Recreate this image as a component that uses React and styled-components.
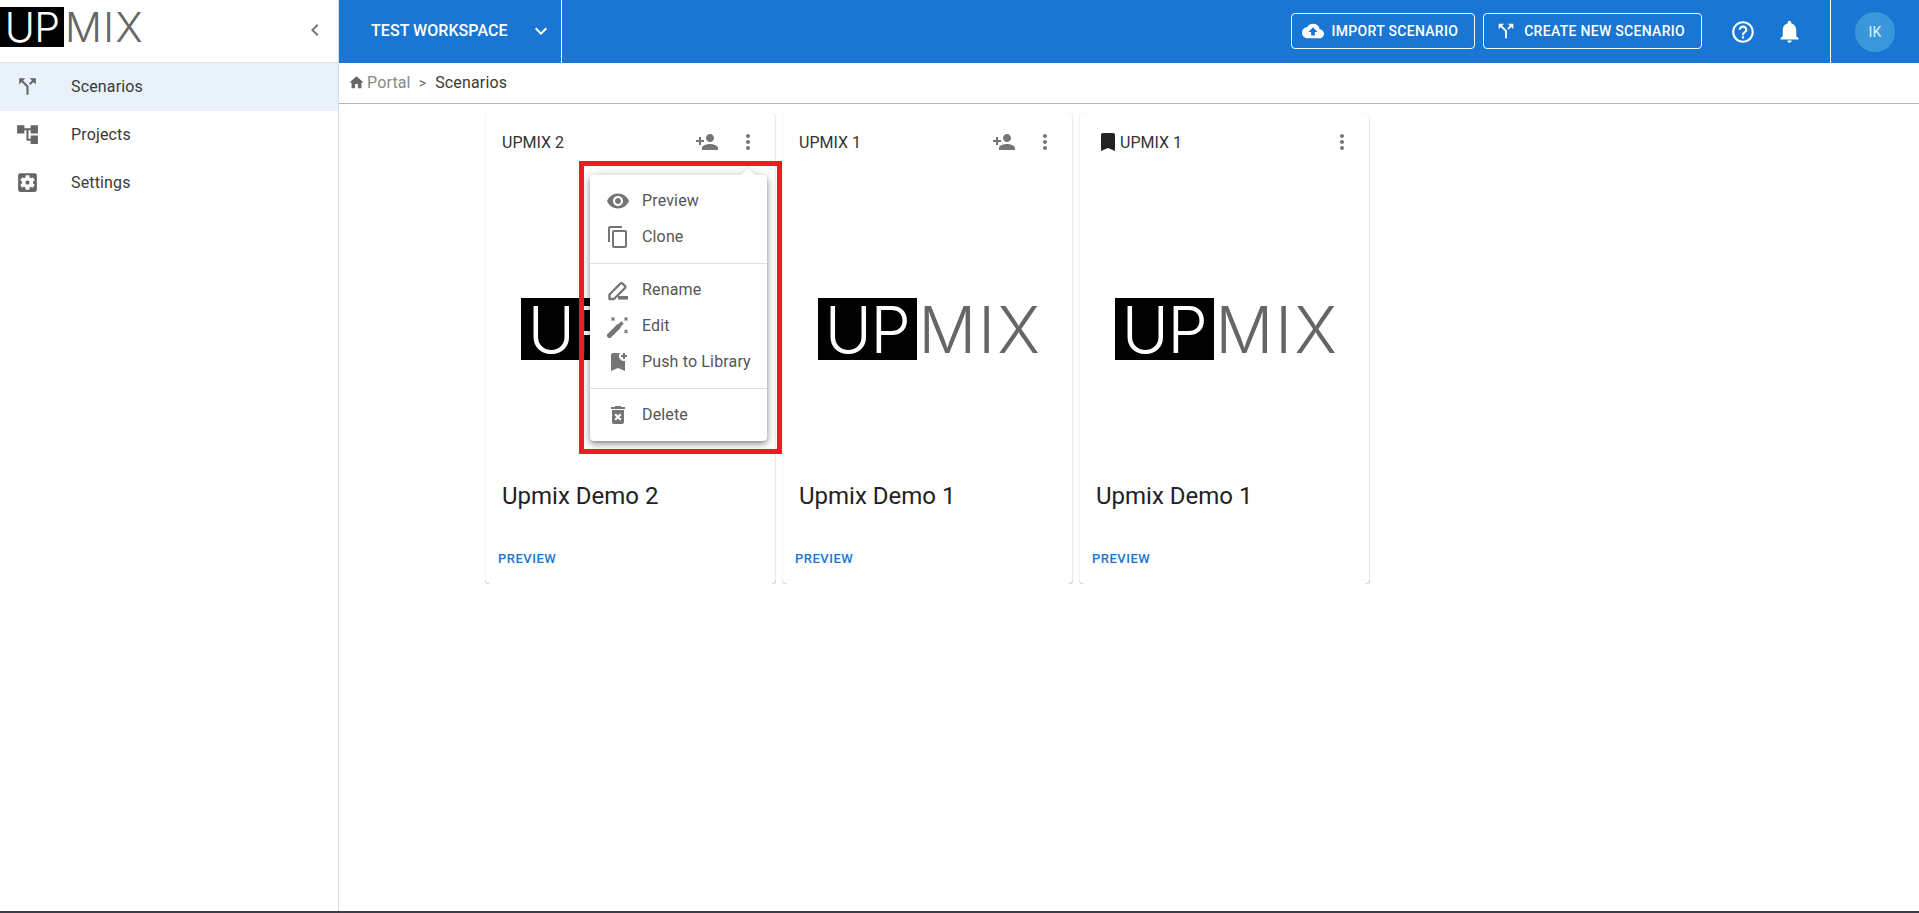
import React from "react";
import styled, { createGlobalStyle } from "styled-components";
import {
  MdCallSplit, MdAccountTree, MdSettingsApplications, MdHome, MdChevronLeft, MdKeyboardArrowDown,
  MdCloudUpload, MdHelpOutline, MdNotifications, MdPersonAdd, MdMoreVert, MdVisibility, MdContentCopy,
  MdBookmarkAdd, MdDeleteForever, MdBookmark,
} from "react-icons/md";

const Global = createGlobalStyle`
  html, body { margin: 0; padding: 0; background: #fff; }
  body { font-family: Roboto, "Liberation Sans", sans-serif; color: #333; overflow: hidden; letter-spacing: 0.15px; }
  * { box-sizing: border-box; }
`;

const Page = styled.div`display: flex; flex-direction: column; height: 913px;`;
const Shell = styled.div`flex: 1; display: grid; grid-template-columns: 339px 1fr; min-height: 0;`;
const BottomLine = styled.div`height: 2px; background: #3c3c46;`;

const Sidebar = styled.aside`border-right: 1px solid #dcdcdc; display: flex; flex-direction: column;`;
const SidebarTop = styled.div`
  height: 63px; border-bottom: 1px solid #e0e0e0; display: flex; align-items: flex-start; justify-content: space-between;
  padding: 7px 11px 0 0; color: #757575;
`;
const CollapseIcon = styled.span`display: flex; margin-top: 11px; font-size: 24px;`;
const NavItem = styled.div`
  height: 48px; display: flex; align-items: center; gap: 31px; padding: 0 0 1px 15px; font-size: 16px; color: #3a3a3a;
  background: ${(p) => (p.$active ? "#e9f1fa" : "transparent")};
  svg { font-size: 25px; color: #666; flex: none; }
`;

const LogoWrap = styled.div`display: flex; align-items: stretch; height: ${(p) => (p.$small ? 40 : 62)}px; width: ${(p) => (p.$small ? 142 : 220)}px; flex: none;`;
const LogoUp = styled.span`
  flex: none; background: #000; color: #fff; width: ${(p) => (p.$small ? 64 : 99)}px; display: flex; align-items: center; justify-content: center;
  padding-top: ${(p) => (p.$small ? 1 : 2)}px;
  font-family: Inter, sans-serif; font-weight: 300; font-size: ${(p) => (p.$small ? 41 : 64)}px; line-height: 1; letter-spacing: -0.02em;
`;
const LogoMix = styled.span`
  flex: none; color: #666; display: flex; align-items: center; padding: ${(p) => (p.$small ? "1px 0 0 1px" : "2px 0 0 2px")};
  font-family: Inter, sans-serif; font-weight: 300; font-size: ${(p) => (p.$small ? 41 : 64)}px; line-height: 1; letter-spacing: 0.035em;
`;
const Logo = ({ small }) => (
  <LogoWrap $small={small}>
    <LogoUp $small={small}>UP</LogoUp>
    <LogoMix $small={small}>MIX</LogoMix>
  </LogoWrap>
);

const Main = styled.main`display: flex; flex-direction: column; min-width: 0;`;
const Header = styled.header`height: 63px; background: #1976d2; display: flex; align-items: stretch; color: #fff;`;
const Workspace = styled.div`
  width: 223px; padding: 0 8px 2px 32px; border-right: 1px solid #fff; display: flex; align-items: center; justify-content: space-between;
  font-size: 16px; font-weight: 500; letter-spacing: 0.05px;
  svg { font-size: 24px; }
`;
const HeaderActions = styled.div`margin-left: auto; display: flex; align-items: center; gap: 8px;`;
const OutlineButton = styled.button`
  height: 36px; margin-bottom: 1px; border: 1px solid #fff; border-radius: 4px; background: transparent; color: #fff;
  display: flex; align-items: center; gap: ${(p) => p.$gap}px; padding: 0 16px 0 ${(p) => p.$pad}px;
  font-family: inherit; font-size: 14px; font-weight: 500; letter-spacing: 0.3px;
  svg { font-size: 22px; flex: none; }
`;
const HeaderIcons = styled.div`display: flex; margin: 0 17px; align-items: center;`;
const HeaderIcon = styled.span`width: 47px; display: flex; justify-content: center; font-size: ${(p) => p.$size}px;`;
const UserArea = styled.div`width: 89px; border-left: 1px solid #fff; display: flex; align-items: center; justify-content: center;`;
const Avatar = styled.div`
  width: 40px; height: 40px; border-radius: 50%; background: #3b97dc; display: flex; align-items: center; justify-content: center;
  font-size: 14px; color: #e3f0fa;
`;

const Breadcrumb = styled.nav`
  height: 41px; border-bottom: 1px solid #b5b5b5; display: flex; align-items: center; padding: 0 0 1px 9px; font-size: 16px;
  svg { font-size: 17px; color: #666; margin-right: 2px; }
`;
const CrumbLink = styled.span`color: #888;`;
const CrumbSep = styled.span`color: #666; margin: 0 9px 0 8px; font-size: 14px;`;
const CrumbHere = styled.span`color: #3a3a3a;`;

const Content = styled.div`flex: 1; padding: 9px 0 0 147px; display: flex; gap: 8px; align-items: flex-start;`;
const Card = styled.article`
  width: 289px; position: relative; background: #fff; border-radius: 4px; flex: none;
  box-shadow: 1px 0 1px rgba(0,0,0,.09), -1px 0 1px rgba(0,0,0,.05);
  &::before, &::after {
    content: ""; position: absolute; bottom: -1px; width: 3px; height: 3px; border-bottom: 1px solid #d4d4d4;
  }
  &::before { left: -1px; border-left: 1px solid #e4e4e4; border-bottom-left-radius: 3px; }
  &::after { right: -1px; border-right: 1px solid #d4d4d4; border-bottom-right-radius: 3px; }
`;
const CardHeader = styled.div`height: 58px; display: flex; align-items: center; padding: 0 7px 0 16px;`;
const CardTag = styled.div`flex: 1; display: flex; align-items: center; font-size: 16px; color: #333; letter-spacing: 0; svg { font-size: 24px; color: #222; }`;
const CardIcon = styled.span`width: 41px; display: flex; justify-content: center; font-size: 24px; color: #757575;`;
const Media = styled.div`height: 300px; padding-top: 127px; display: flex; justify-content: center; align-items: flex-start;`;
const CardName = styled.h3`margin: 0; height: 50px; padding-left: 16px; display: flex; align-items: center; font-size: 24px; font-weight: 400; color: #222; letter-spacing: 0;`;
const CardActions = styled.div`height: 62px; padding: 12px 0 0 12px; display: flex; align-items: center;`;
const PreviewLink = styled.span`font-size: 13px; font-weight: 500; letter-spacing: 0.5px; color: #1976d2;`;

const Menu = styled.div`
  position: absolute; left: 104px; top: 62px; width: 177px; background: #fff; border-radius: 4px; padding: 8px 0; z-index: 2;
  box-shadow: 0 2px 4px -1px rgba(0,0,0,.35), 0 4px 8px rgba(0,0,0,.2), 0 1px 14px rgba(0,0,0,.15);
  &::before {
    content: ""; position: absolute; top: -5px; right: 14px; width: 10px; height: 10px; background: #fff; transform: rotate(45deg);
    box-shadow: -1px -1px 2px rgba(0,0,0,.08);
  }
`;
const MenuItem = styled.div`
  height: 36px; display: flex; align-items: center; gap: 12px; padding: 0 0 1px 16px; font-size: 16px; color: #555; position: relative;
  svg { font-size: 24px; color: #757575; flex: none; }
`;
const MenuDivider = styled.hr`margin: 8px 0; border: 0; height: 1px; background: #e0e0e0;`;
const Annotation = styled.div`position: absolute; left: 93px; top: 48px; width: 203px; height: 293px; border: 5px solid #ed1c24; z-index: 3; pointer-events: none;`;

const RenameIcon = () => (
  <svg width="1em" height="1em" viewBox="0 0 24 24">
    <path d="M3.5 16.5L14.5 5.5a1.4 1.4 0 0 1 2 0l2.5 2.5a1.4 1.4 0 0 1 0 2L8 21H3.5z" fill="none" stroke="currentColor" strokeWidth="2.4" strokeLinejoin="round" />
    <rect x="12" y="18" width="10" height="3.6" fill="currentColor" />
  </svg>
);

const WandIcon = () => (
  <svg width="1em" height="1em" viewBox="0 0 24 24" fill="none" stroke="currentColor">
    <line x1="3.5" y1="21.5" x2="12" y2="13" strokeWidth="5" strokeLinecap="round" />
    <line x1="12.5" y1="12.5" x2="16.5" y2="8.5" strokeWidth="3.4" />
    <g strokeWidth="1.3">
      <line x1="5.5" y1="3.5" x2="8.5" y2="6.5" />
      <line x1="8.5" y1="3.5" x2="5.5" y2="6.5" />
      <line x1="18.5" y1="3.5" x2="21.5" y2="6.5" />
      <line x1="21.5" y1="3.5" x2="18.5" y2="6.5" />
      <line x1="18.5" y1="16" x2="21.5" y2="19" />
      <line x1="21.5" y1="16" x2="18.5" y2="19" />
    </g>
  </svg>
);

const cards = [
  { tag: "UPMIX 2", name: "Upmix Demo 2", share: true, menu: true },
  { tag: "UPMIX 1", name: "Upmix Demo 1", share: true },
  { tag: "UPMIX 1", name: "Upmix Demo 1", saved: true },
];

const ScenarioCard = ({ card }) => (
  <Card>
    <CardHeader>
      <CardTag>{card.saved && <MdBookmark />}{card.tag}</CardTag>
      {card.share && <CardIcon><MdPersonAdd /></CardIcon>}
      <CardIcon><MdMoreVert /></CardIcon>
    </CardHeader>
    <Media><Logo /></Media>
    <CardName>{card.name}</CardName>
    <CardActions><PreviewLink>PREVIEW</PreviewLink></CardActions>
    {card.menu && (
      <>
        <Menu>
          <MenuItem><MdVisibility />Preview</MenuItem>
          <MenuItem><MdContentCopy />Clone</MenuItem>
          <MenuDivider />
          <MenuItem><RenameIcon />Rename</MenuItem>
          <MenuItem><WandIcon />Edit</MenuItem>
          <MenuItem><MdBookmarkAdd />Push to Library</MenuItem>
          <MenuDivider />
          <MenuItem><MdDeleteForever />Delete</MenuItem>
        </Menu>
        <Annotation />
      </>
    )}
  </Card>
);

export default function App() {
  return (
    <Page>
      <Global />
      <Shell>
        <Sidebar>
          <SidebarTop>
            <Logo small />
            <CollapseIcon><MdChevronLeft /></CollapseIcon>
          </SidebarTop>
          <NavItem $active><MdCallSplit />Scenarios</NavItem>
          <NavItem><MdAccountTree />Projects</NavItem>
          <NavItem><MdSettingsApplications />Settings</NavItem>
        </Sidebar>
        <Main>
          <Header>
            <Workspace>TEST WORKSPACE<MdKeyboardArrowDown /></Workspace>
            <HeaderActions>
              <OutlineButton $pad={10} $gap={8}><MdCloudUpload />IMPORT SCENARIO</OutlineButton>
              <OutlineButton $pad={11} $gap={7}><MdCallSplit />CREATE NEW SCENARIO</OutlineButton>
            </HeaderActions>
            <HeaderIcons>
              <HeaderIcon $size={26}><MdHelpOutline /></HeaderIcon>
              <HeaderIcon $size={27}><MdNotifications /></HeaderIcon>
            </HeaderIcons>
            <UserArea><Avatar>IK</Avatar></UserArea>
          </Header>
          <Breadcrumb>
            <MdHome /><CrumbLink>Portal</CrumbLink><CrumbSep>&gt;</CrumbSep><CrumbHere>Scenarios</CrumbHere>
          </Breadcrumb>
          <Content>
            {cards.map((c, i) => <ScenarioCard key={i} card={c} />)}
          </Content>
        </Main>
      </Shell>
      <BottomLine />
    </Page>
  );
}
